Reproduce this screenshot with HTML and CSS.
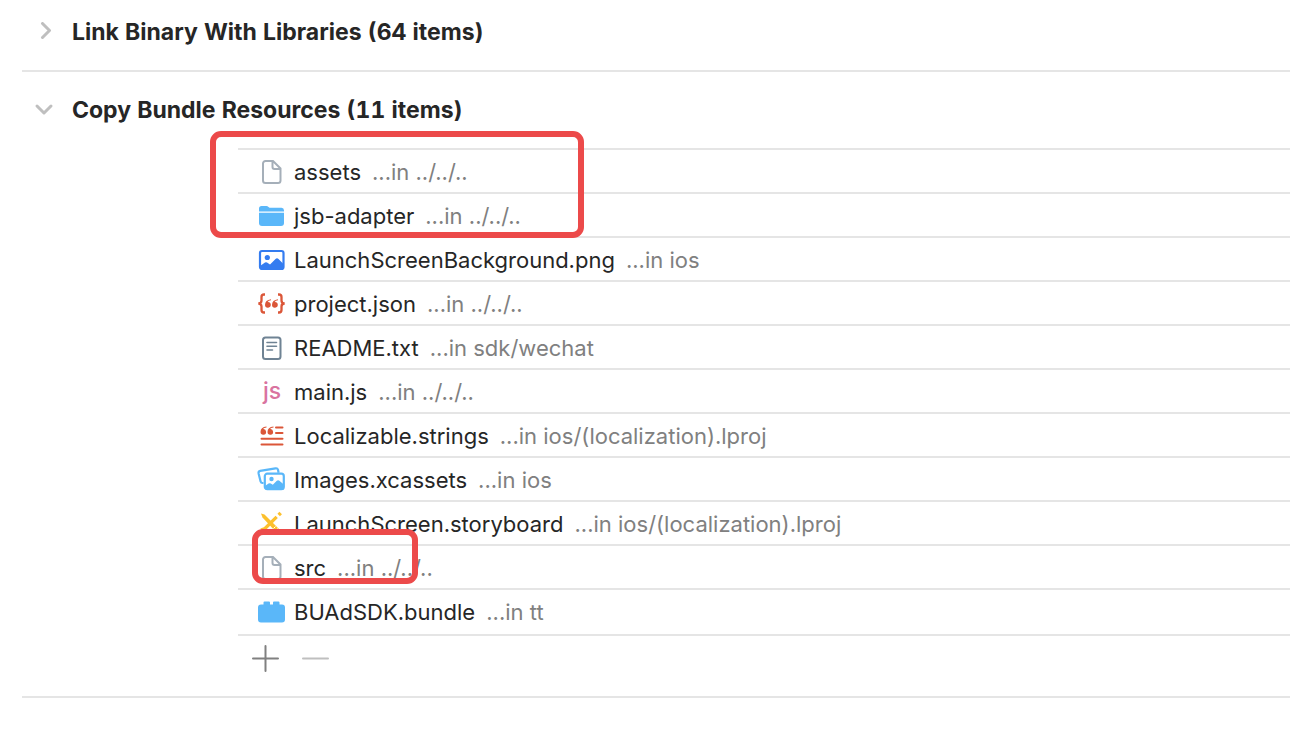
FILE: index.html
```html
<!DOCTYPE html>
<html lang="en">
<head>
<meta charset="utf-8">
<title>Build Phases</title>
<link rel="stylesheet" href="styles.css">
</head>
<body>
<main class="phases">
  <section class="phase">
    <h2 class="phase-title"><button class="disclosure" type="button" aria-expanded="false">
      <svg class="chevron" viewBox="0 0 20 20"><path d="M8.500 1.500l7 7-7 7"/></svg>
      <span>Link Binary With Libraries (64 items)</span></button></h2>
  </section>
  <section class="phase open">
    <h2 class="phase-title"><button class="disclosure" type="button" aria-expanded="true">
      <svg class="chevron" viewBox="0 0 20 20"><path d="M3 6l7 7 7-7"/></svg>
      <span>Copy Bundle Resources (11 items)</span></button></h2>
    <div class="resources">
      <ul class="files">
        <li class="file"><svg class="icon doc" viewBox="0 0 28 28"><path d="M7.500 3h7.500l7.500 7.500V22.500a2.500 2.500 0 0 1-2.500 2.500H7.500A2.500 2.500 0 0 1 5 22.500v-17A2.500 2.500 0 0 1 7.500 3zM14.500 3v6a2 2 0 0 0 2 2h6"/></svg><span class="name">assets</span><span class="path">...in ../../..</span></li>
        <li class="file"><svg class="icon sky" viewBox="0 0 28 28"><path d="M1 9.500V6.500Q1 4 3.500 4h5q1 0 2 1l1 .8h12Q26 6 26 8.500v1z"/><path d="M1 10.800h25V21q0 3-3 3H4q-3 0-3-3z"/></svg><span class="name">jsb-adapter</span><span class="path">...in ../../..</span></li>
        <li class="file"><svg class="icon" viewBox="0 0 28 28"><rect x="2" y="5" width="23.500" height="18" rx="2" fill="#fff" stroke="#347cf0" stroke-width="2.200"/><circle cx="9.300" cy="11.500" r="2.600" fill="#347cf0"/><path d="M2 20l5-3.500q1-.7 2 0l3 2 5.500-5.500q1.500-1.300 3 0L25.500 18v5H2z" fill="#347cf0"/></svg><span class="name">LaunchScreenBackground.png</span><span class="path">...in ios</span></li>
        <li class="file"><svg class="icon" viewBox="0 0 28 28"><path d="M7 4.500H6Q3.500 4.500 3.500 7v3.500q0 3-3.200 3 3.200 0 3.200 3V20q0 2.500 2.500 2.500h1M20 4.500h1Q23.500 4.500 23.500 7v3.500q0 3 3.200 3-3.200 0-3.200 3V20q0 2.500-2.500 2.500h-1" fill="none" stroke="#db5638" stroke-width="2.300"/><g class="quotes"><path d="M13 9.200Q7 10 7 15a2.900 2.900 0 1 0 2.700-3.100q.6-1.200 3.300-1.600z"/><path d="M20 9.200q-6 .8-6 5.800a2.900 2.900 0 1 0 2.700-3.100q.6-1.200 3.300-1.600z"/></g></svg><span class="name">project.json</span><span class="path">...in ../../..</span></li>
        <li class="file"><svg class="icon text-file" viewBox="0 0 28 28"><rect x="5" y="3.500" width="17.500" height="21.500" rx="2.500"/><path d="M9 8.500h9.500M9 12.200h9.500M9 16h5.500" stroke-width="1.600"/></svg><span class="name">README.txt</span><span class="path">...in sdk/wechat</span></li>
        <li class="file"><span class="icon js">js</span><span class="name">main.js</span><span class="path">...in ../../..</span></li>
        <li class="file"><svg class="icon" viewBox="0 0 28 28"><g class="quotes"><path d="M8.500 4.500Q2.500 5 2.500 10a2.800 2.800 0 1 0 2.500-2.900q.8-1.400 3.500-1.700z"/><path d="M15.500 4.500q-6 .5-6 5.500a2.800 2.800 0 1 0 2.500-2.900q.8-1.400 3.500-1.700z"/></g><path d="M18 5.500h6.500M18 11h6.500M3.500 16.800h21M3.500 22.500h21" stroke="#db5638" stroke-width="2" stroke-linecap="round"/></svg><span class="name">Localizable.strings</span><span class="path">...in ios/(localization).lproj</span></li>
        <li class="file"><svg class="icon" viewBox="0 0 28 28"><path d="M5.500 17H4.500q-1.500 0-1.900-1.500L.6 7.500Q.2 5.300 2.200 4.900L17.500 2.300q2-.3 2.500 1.500l.6 3" fill="none" stroke="#5ab7f9" stroke-width="2.200"/><rect x="6.800" y="7.700" width="19" height="15.500" rx="2.500" fill="#fff" stroke="#5ab7f9" stroke-width="2.200"/><circle cx="13.500" cy="13" r="2.200" fill="#5ab7f9"/><path d="M7 20l3.500-2.500q1.200-.7 2.300 0l2 1.300 4-4q1.300-1 2.600 0l4.400 3.700V23.500H7z" fill="#5ab7f9"/></svg><span class="name">Images.xcassets</span><span class="path">...in ios</span></li>
        <li class="file"><svg class="icon board" viewBox="0 0 28 28"><path d="M3 3.500l3.500 1L21 19l-3 3L4.500 7.500z" fill="#fcc02d" stroke="none"/><path d="M3 20l4-1.500L18.700 6.800" stroke-width="3.200"/><path d="M20.700 4.900l2-2" stroke-width="3.500"/><path d="M15.500 18.500l2-2M17.500 20.500l2-2" stroke="#fff" stroke-width="1"/></svg><span class="name">LaunchScreen.storyboard</span><span class="path">...in ios/(localization).lproj</span></li>
        <li class="file"><svg class="icon doc" viewBox="0 0 28 28"><path d="M7.500 3h7.500l7.500 7.500V22.500a2.500 2.500 0 0 1-2.500 2.500H7.500A2.500 2.500 0 0 1 5 22.500v-17A2.500 2.500 0 0 1 7.500 3zM14.500 3v6a2 2 0 0 0 2 2h6"/></svg><span class="name">src</span><span class="path">...in ../../..</span></li>
        <li class="file"><svg class="icon sky" viewBox="0 0 28 28"><path d="M3 6.500h2.500V4.500q0-1 1-1h4.500q1 0 1 1v2h3v-2q0-1 1-1h4.500q1 0 1 1v2H24q3 0 3 3v12q0 3-3 3H3q-3 0-3-3V9.500q0-3 3-3z"/></svg><span class="name">BUAdSDK.bundle</span><span class="path">...in tt</span></li>
      </ul>
      <div class="actions">
        <button class="action" type="button" aria-label="Add items"><svg viewBox="0 0 28 28"><path d="M2 14.500h25M14.500 2v25"/></svg></button>
        <button class="action" type="button" aria-label="Remove items" disabled><svg viewBox="0 0 28 28"><path d="M2 14.500h25"/></svg></button>
      </div>
      <div class="marker marker-top"></div>
      <div class="marker marker-src"></div>
    </div>
  </section>
</main>
</body>
</html>
```
FILE: styles.css
```css
* { box-sizing: border-box; }
body { margin: 0; background: #fff; color: #262626; font-family: Inter, "Liberation Sans", sans-serif; font-size: 22px; }
.phases { padding-left: 22px; }
.phase { border-bottom: 2px solid #e5e5e5; padding-bottom: 16px; }
.phase-title { margin: 0; padding-top: 10px; font-size: 23px; line-height: 44px; font-variant-numeric: tabular-nums; }
.disclosure { display: flex; align-items: center; gap: 18px; width: 100%; padding: 0 0 0 12px; border: 0; background: none; color: inherit; font: inherit; font-weight: 700; text-align: left; }
.disclosure span { flex: 1; }
.chevron { width: 20px; height: 20px; fill: none; stroke: #bfbfbf; stroke-width: 3; stroke-linecap: round; stroke-linejoin: round; }
.open .phase-title { padding-top: 16px; }
.resources { position: relative; margin: 16px 0 0 216px; }
.files { list-style: none; margin: 0; padding: 0 0 2px; border-bottom: 2px solid #e5e5e5; }
.file { display: flex; align-items: center; height: 44px; padding: 2px 0 0 20px; border-top: 2px solid #e5e5e5; line-height: 40px; white-space: nowrap; }
.icon { flex: none; width: 28px; height: 28px; margin-right: 8px; overflow: visible; }
.name { margin-right: 11px; }
.path { color: #808080; }
.doc { fill: none; stroke: #a5afb9; stroke-width: 2; }
.sky { fill: #5ab7f9; }
.quotes { fill: #db5638; }
.text-file { fill: none; stroke: #6f8394; stroke-width: 2; stroke-linecap: round; }
.board { fill: none; stroke: #fcc02d; }
.js { color: #d9739f; font-size: 23px; font-weight: 500; line-height: 26px; text-align: center; }
.actions { display: flex; gap: 22px; padding: 8px 0 8px 13px; }
.action { width: 28px; height: 28px; padding: 0; border: 0; background: none; color: #808080; }
.action:disabled { color: #bfbfbf; }
.action svg { display: block; fill: none; stroke: currentColor; stroke-width: 2; stroke-linecap: round; }
.marker { position: absolute; border: 6px solid #ec4a4a; border-radius: 11px; pointer-events: none; }
.marker-top { left: -28px; top: -17px; width: 374px; height: 107px; }
.marker-src { left: 14px; top: 381px; width: 166px; height: 55px; }
```
